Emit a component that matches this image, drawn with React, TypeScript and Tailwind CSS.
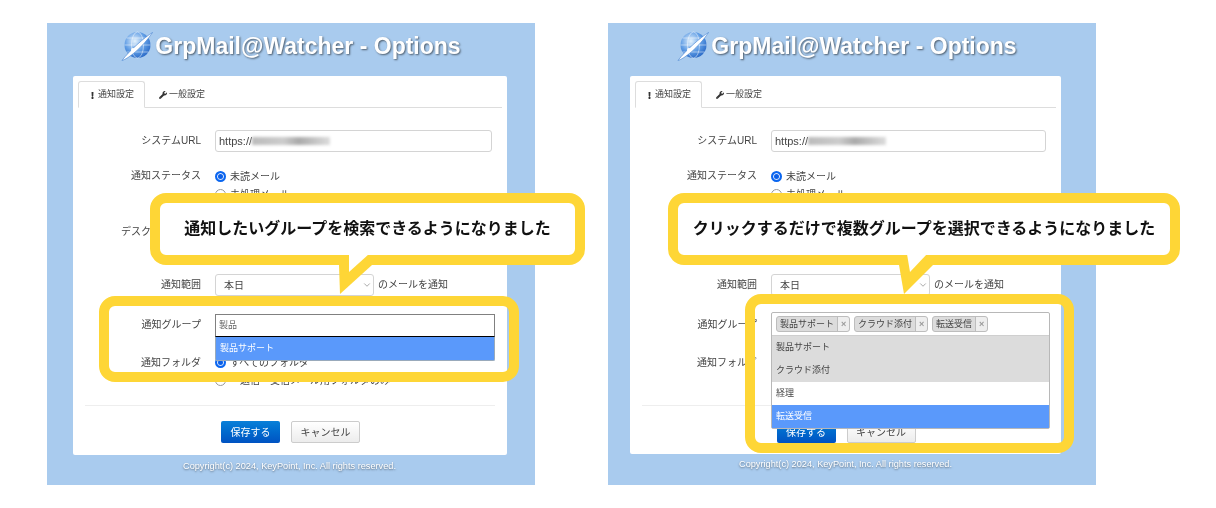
import { ReactNode } from 'react';
import { ChevronDown } from 'lucide-react';
import { FaExclamation, FaWrench } from 'react-icons/fa';

type Variant = 'search' | 'multi';

function Logo() {
  return (
    <svg width="32" height="32" viewBox="0 0 32 32" className="shrink-0">
      <defs>
        <radialGradient id="globe" cx="0.4" cy="0.35" r="0.75">
          <stop offset="0" stopColor="#e4f2fd" />
          <stop offset="0.55" stopColor="#5d9be4" />
          <stop offset="1" stopColor="#1f5fc0" />
        </radialGradient>
      </defs>
      <circle cx="16.500" cy="15" r="13" fill="url(#globe)" />
      <g fill="none" stroke="#ffffff" strokeOpacity="0.6" strokeWidth="0.8">
        <ellipse cx="16.500" cy="15" rx="6" ry="13" />
        <path d="M3.500 15h26M5.500 8h22M5.500 22h22" />
      </g>
      <path d="M1 30.500C7 29 22 17 31.500 2.500 24 7 8 21 1 30.500Z" fill="#ffffff" stroke="#3f7fd0" strokeWidth="0.6" />
      <circle cx="12" cy="20" r="2" fill="#ffffff" />
    </svg>
  );
}

function Radio({ checked = false, children }: { checked?: boolean; children: ReactNode }) {
  return (
    <div className="flex h-[18px] items-center gap-[4px]">
      {checked ? (
        <span className="h-[11px] w-[11px] shrink-0 rounded-full border-[2.500px] border-[#0a66f0] bg-[#0a5fe8] ring-1 ring-[#8ab8ff] [box-shadow:inset_0_0_0_1px_#dfeaff]" />
      ) : (
        <span className="h-[11px] w-[11px] shrink-0 rounded-full border border-[#9a9a9a] bg-white" />
      )}
      <span>{children}</span>
    </div>
  );
}

function Row({
  variant,
  label,
  className,
  labelClassName,
  children
}: {
  variant: Variant;
  label: string;
  className?: string;
  labelClassName?: string;
  children: ReactNode;
}) {
  return (
    <div className={`flex ${className ?? ''}`}>
      <div className={`h-[18px] shrink-0 text-right leading-[18px] ${variant === 'search' ? 'w-[128px] mr-[14px]' : 'w-[127px] mr-[14px]'} ${labelClassName ?? ''}`}>
        {label}
      </div>
      <div className="min-w-0 flex-1">{children}</div>
    </div>
  );
}

function Tag({ children }: { children: ReactNode }) {
  return (
    <span className="flex h-[16px] items-stretch rounded-[3px] border border-[#bdbdbd] bg-[#dcdcdc] leading-[14px]">
      <span className="px-[3px]">{children}</span>
      <span className="w-[12px] rounded-r-[3px] border-l border-[#bdbdbd] bg-[#eeeeee] text-center text-[9px] font-bold text-[#999]">×</span>
    </span>
  );
}

function SearchDropdown() {
  return (
    <div className="absolute left-0 top-[-1px] z-10 w-[280px] text-[9px]">
      <div className="flex h-[23px] items-center border border-[#808080] border-b-black bg-white px-[3px] text-[#666]">製品</div>
      <div className="flex h-[24px] items-center rounded-b-[2px] border border-t-0 border-[#9ab] bg-[#5a99fb] px-[4px] text-white">製品サポート</div>
    </div>
  );
}

function MultiDropdown() {
  return (
    <div className="absolute left-0 top-[-3px] z-10 w-[279px] rounded-[2px] border border-[#b8b8b8] bg-white text-[9px]">
      <div className="flex h-[23px] items-center gap-[4px] border-b border-[#cfcfcf] px-[4px]">
        <Tag>製品サポート</Tag>
        <Tag>クラウド添付</Tag>
        <Tag>転送受信</Tag>
      </div>
      <div className="flex h-[23px] items-center bg-[#dcdcdc] px-[4px]">製品サポート</div>
      <div className="flex h-[23px] items-center bg-[#dcdcdc] px-[4px]">クラウド添付</div>
      <div className="flex h-[23px] items-center bg-white px-[4px]">経理</div>
      <div className="flex h-[23px] items-center bg-[#5a99fb] px-[4px] text-white">転送受信</div>
    </div>
  );
}

function Panel({ variant }: { variant: Variant }) {
  const search = variant === 'search';
  return (
    <div className="relative h-[462px] w-[488px] shrink-0 bg-[#a9cbee] blur-[0.4px] [font-family:'Liberation_Sans','Noto_Sans_CJK_JP',sans-serif]">
      <header className={`flex h-[53px] items-center justify-center gap-[2px] pb-[7px] ${search ? '' : 'pr-[10px]'}`}>
        <Logo />
        <h1 className="text-[23px] font-bold text-white [text-shadow:1px_1px_2px_rgba(0,0,0,0.55)]">GrpMail@Watcher - Options</h1>
      </header>

      <div className={`rounded-[2px] bg-white pt-[5px] text-[10px] text-[#444] ${search ? 'ml-[26px] h-[379px] w-[434px]' : 'ml-[22px] h-[378px] w-[431px]'}`}>
        <nav className="mx-[5px] flex h-[27px] border-b border-[#ddd] text-[9px]">
          <div className="flex h-[27px] w-[67px] items-center justify-center gap-[2px] rounded-t-[3px] border border-b-white border-[#ddd] bg-white pt-[1px]">
            <FaExclamation size={7} className="text-[#333]" />
            通知設定
          </div>
          <div className="flex w-[74px] items-center justify-center gap-[2px] pt-[1px]">
            <FaWrench size={8} className="text-[#333]" />
            一般設定
          </div>
        </nav>

        <div className="pt-[22px]">
          <Row variant={variant} label="システムURL" className="h-[22px] items-center">
            <div className={`flex h-[22px] items-center rounded-[3px] border border-[#d4d4d4] px-[3px] ${search ? 'w-[277px]' : 'w-[275px]'}`}>
              <span className="text-[11px]">https://</span>
              <span className="h-[8px] w-[78px] bg-[linear-gradient(90deg,#bbb,#ccc_40%,#aaa_60%,#ddd)] blur-[1.5px]" />
            </div>
          </Row>

          <Row variant={variant} label="通知ステータス" className="mt-[15px]">
            <Radio checked>未読メール</Radio>
            <Radio>未処理メール</Radio>
          </Row>

          <Row variant={variant} label="デスクトップ通知" className="mt-[20px]">
            <Radio checked>通知する</Radio>
            <Radio>通知しない</Radio>
          </Row>

          <Row variant={variant} label="通知範囲" className="mt-[15px]" labelClassName="mt-[2px]">
            <div className="flex items-center gap-[4px]">
              <div className="flex h-[22px] w-[159px] items-center justify-between rounded-[3px] border border-[#d4d4d4] pl-[8px] pr-[1px]">
                本日
                <ChevronDown size={10} strokeWidth={1.5} className="text-[#777]" />
              </div>
              <span className="mb-[2px]">のメールを通知</span>
            </div>
          </Row>

          <Row variant={variant} label="通知グループ" className="mt-[19px] h-[23px]" labelClassName="mt-[1px]">
            <div className="relative">{search ? <SearchDropdown /> : <MultiDropdown />}</div>
          </Row>

          <Row variant={variant} label="通知フォルダ" className="mt-[15px]" labelClassName="mt-[1px]">
            <Radio checked>すべてのフォルダ</Radio>
            <Radio>一返信・受信メール用フォルダのみ</Radio>
          </Row>

          <hr className="mx-[12px] mt-[16px] border-[#eee]" />

          <div className="mt-[15px] flex justify-center gap-[11px] pl-[1px] text-[10px]">
            <button className="h-[22px] w-[59px] rounded-[2px] bg-gradient-to-b from-[#0a80d8] to-[#0052c2] text-white">保存する</button>
            <button className="h-[22px] w-[69px] rounded-[2px] border border-[#ccc] bg-gradient-to-b from-white to-[#ececec] text-[#444]">キャンセル</button>
          </div>
        </div>
      </div>

      <footer className={`text-[9.200px] text-white [text-shadow:0_1px_2px_rgba(0,0,0,0.5)] ${search ? 'mt-[5px] ml-[136px]' : 'mt-[4px] ml-[131px]'}`}>
        Copyright(c) 2024, KeyPoint, Inc. All rights reserved.
      </footer>

      {/* yellow call-outs lie over the form */}
      <div className={`absolute top-[170px] z-20 h-[72px] ${search ? 'left-[103px] w-[435px]' : 'left-[60px] w-[512px]'}`}>
        <div className="flex h-full items-center justify-center rounded-[16px] border-[10px] border-[#fed636] bg-white pb-[1px] text-[16px] font-bold text-[#111]">
          {search ? '通知したいグループを検索できるようになりました' : 'クリックするだけで複数グループを選択できるようになりました'}
        </div>
        {search ? (
          <svg width="50" height="40" className="absolute left-[180px] top-[61px]">
            <polygon points="9,11 10,40 42,11" fill="#fed636" />
            <polygon points="19,0 19,18 39,0" fill="#ffffff" />
          </svg>
        ) : (
          <svg width="50" height="40" className="absolute left-[230px] top-[61px]">
            <polygon points="1,11 6,40 35,11" fill="#fed636" />
            <polygon points="9,0 12,18 29,0" fill="#ffffff" />
          </svg>
        )}
      </div>

      {search ? (
        <div className="absolute left-[52px] top-[273px] z-20 h-[86px] w-[420px] rounded-[16px] border-[10px] border-[#fed636]" />
      ) : (
        <div className="absolute left-[137px] top-[271px] z-20 h-[159px] w-[329px] rounded-[16px] border-[10px] border-[#fed636]" />
      )}
    </div>
  );
}

export default function App() {
  return (
    <div className="flex h-[508px] w-[1216px] gap-[73px] bg-white pl-[47px] pt-[23px]">
      <Panel variant="search" />
      <Panel variant="multi" />
    </div>
  );
}
